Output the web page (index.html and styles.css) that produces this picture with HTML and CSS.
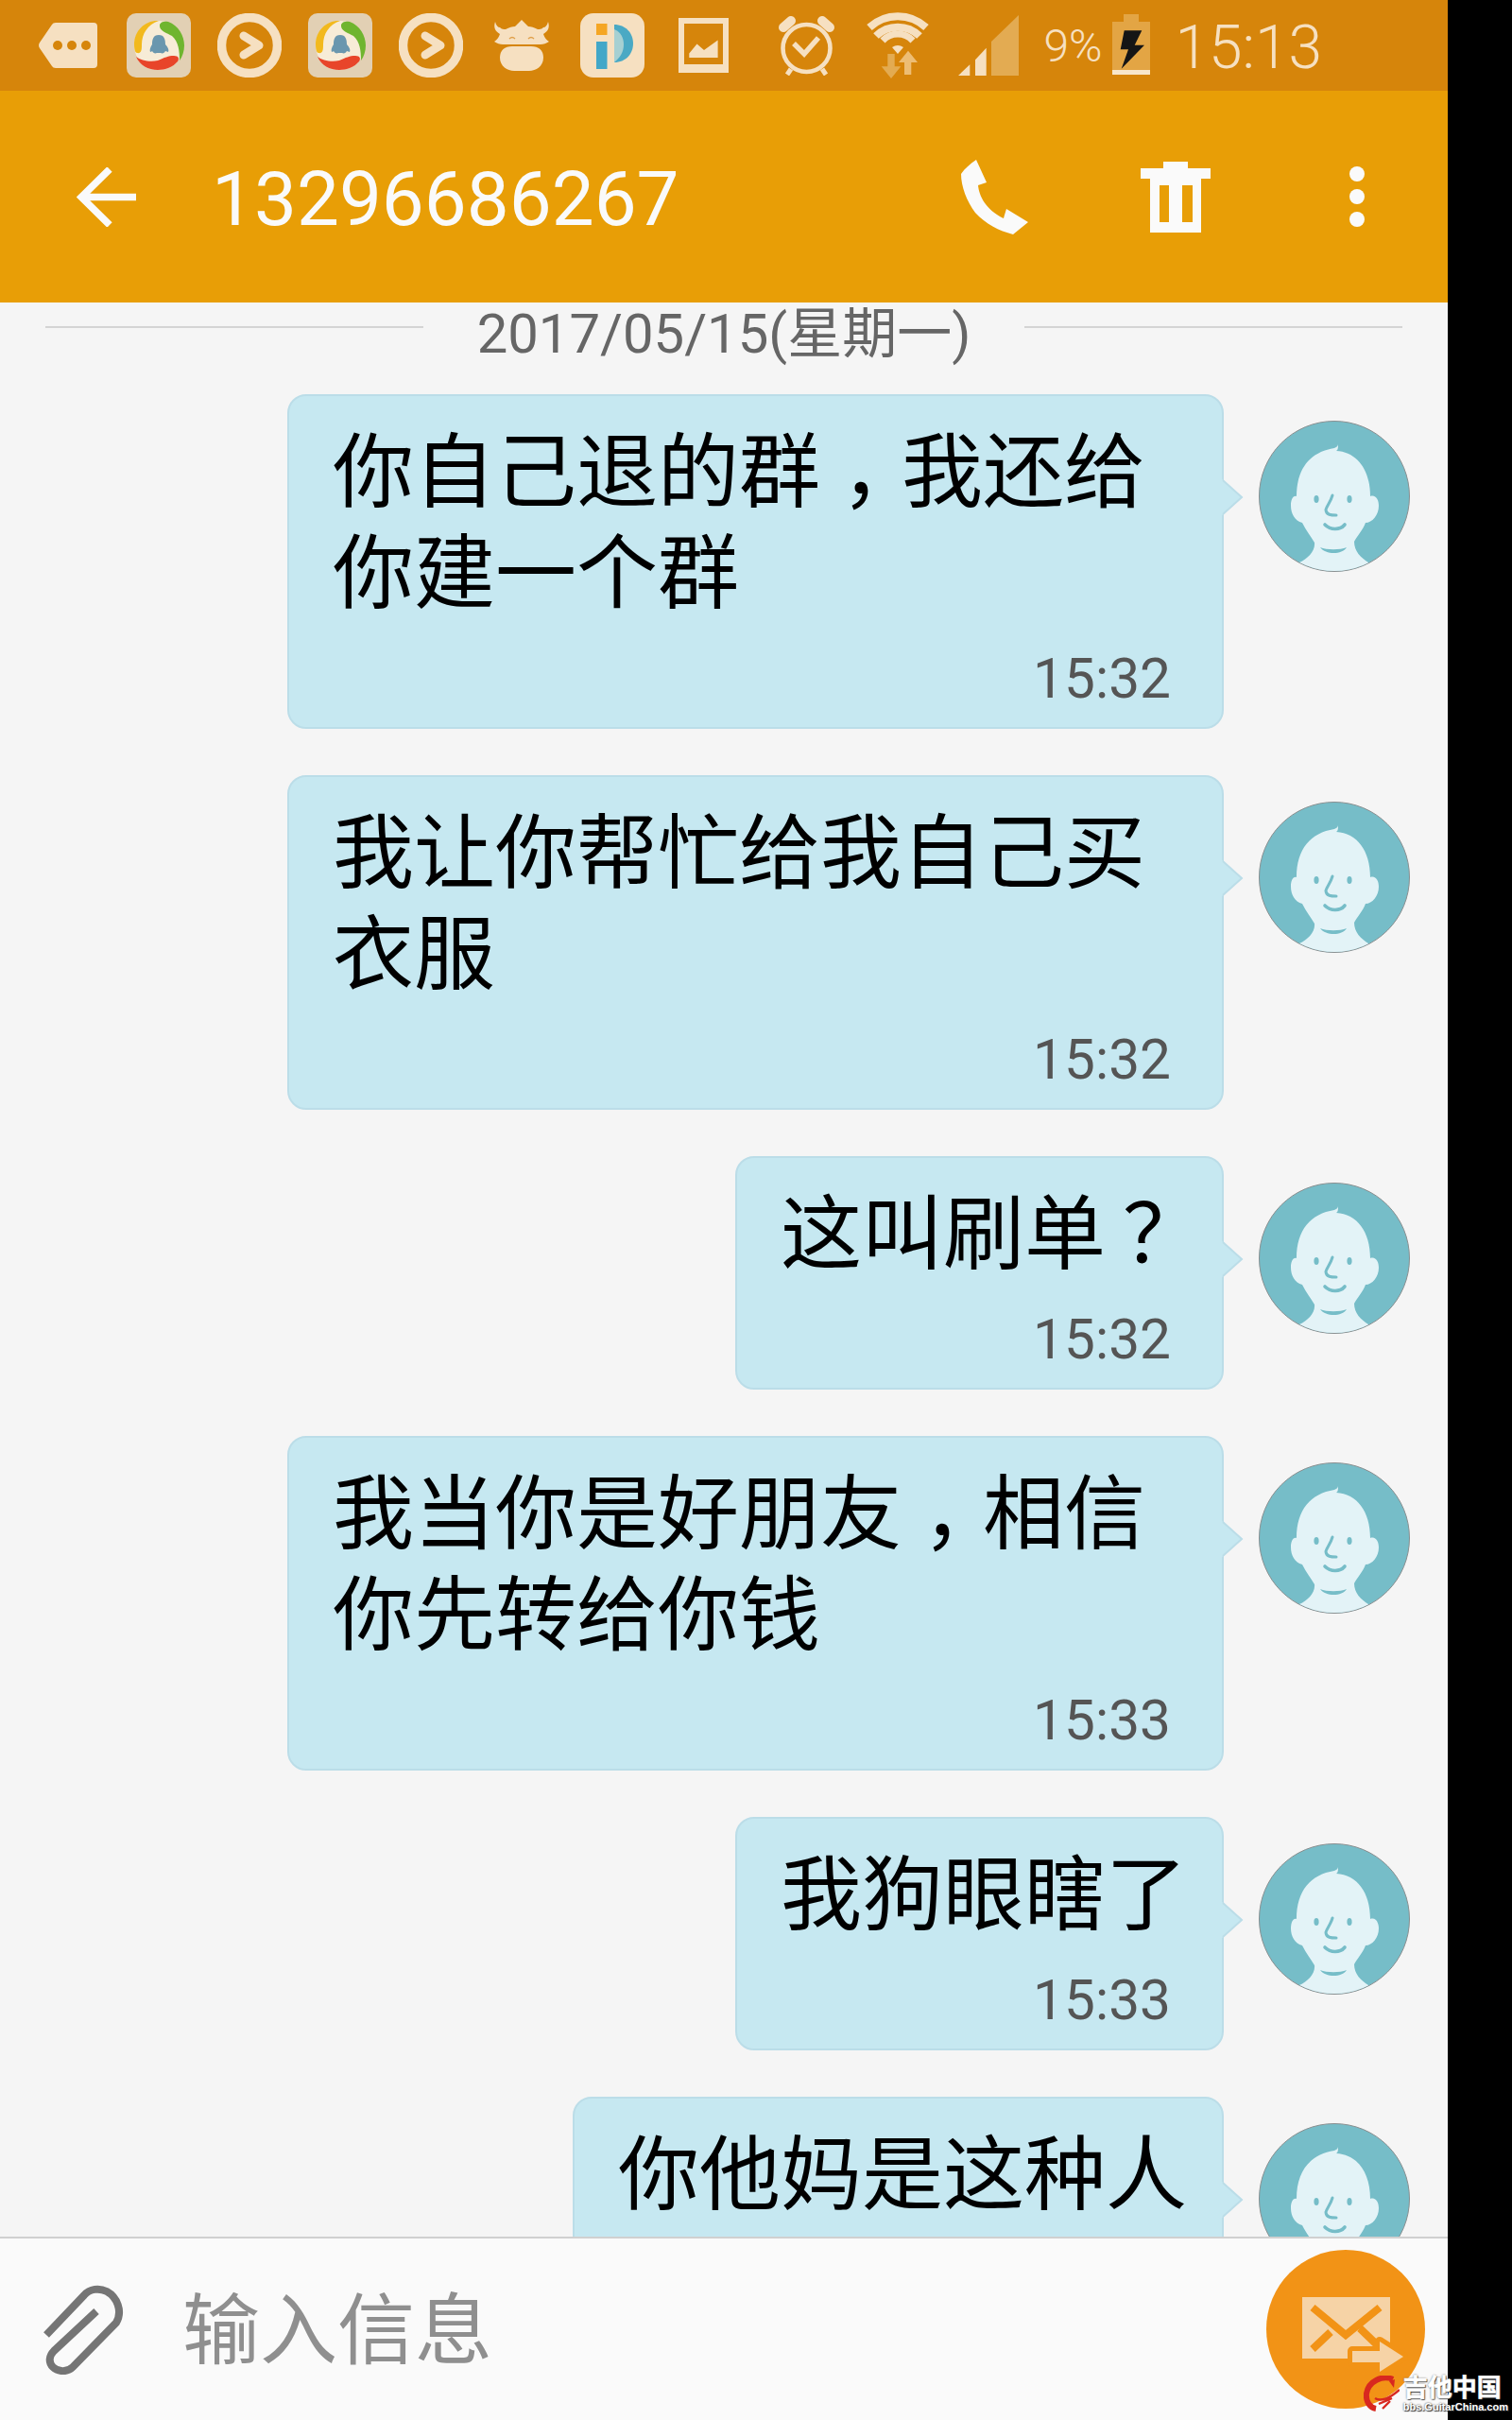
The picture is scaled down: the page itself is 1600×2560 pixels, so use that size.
FILE: index.html
```html
<!DOCTYPE html>
<html lang="zh">
<head>
    <title>13296686267</title>
    <meta charset="UTF-8" />
    <link rel="stylesheet" href="styles.css">
</head>
<body>
<svg class="defs" width="0" height="0">
    <defs>
        <clipPath id="avatarClip"><circle cx="80" cy="80" r="79"/></clipPath>
        <symbol id="avatar" viewBox="0 0 160 160">
            <circle cx="80" cy="80" r="79.5" fill="#76bdc8" stroke="#8a8f90" stroke-width="1"/>
            <g clip-path="url(#avatarClip)">
                <path fill="#e3f3f7" d="M40 80 C40 50 55 33 80 29 C82 28 84 27 84 25 C84 28 84 31 82 32 C104 33 118 52 118 80 C124 78 127 84 127 90 C127 100 120 108 113 108 C110 116 104 122 101 128 C101 138 108 145 116 150 L116 160 L43 160 L43 150 C52 146 60 138 59 129 C55 122 50 116 46 108 C38 106 34 98 34 90 C34 84 36 79 40 80 Z"/>
                <ellipse cx="61" cy="83" rx="2.6" ry="4" fill="#76bdc8"/>
                <ellipse cx="96" cy="83" rx="2.6" ry="4" fill="#76bdc8"/>
                <path d="M78 79 C76 86 72 90 71 94 C71 100 77 100 82 100" fill="none" stroke="#76bdc8" stroke-width="3" stroke-linecap="round"/>
                <path d="M70 110 C76 116 86 116 91 110" fill="none" stroke="#76bdc8" stroke-width="3.6" stroke-linecap="round"/>
                <path d="M65 134 C72 137 86 137 93 134 C88 142 71 142 65 134Z" fill="#76bdc8"/>
            </g>
        </symbol>
        <symbol id="qqNews" viewBox="0 0 68 68">
            <rect width="68" height="68" rx="10" fill="#e2d0b4"/>
            <circle cx="34" cy="34" r="26" fill="#f7ecd7"/>
            <path fill="#f2b91d" d="M34 8 C20 7 8 18 8 33 C8 38 9 42 11 42 C16 43 16 38 16 33 C16 22 22 12 34 8Z"/>
            <path fill="#6fb52f" d="M35 12 C36 9 40 8 44 9 C55 13 61 24 61 34 C61 40 59 46 56 50 C56 40 55 30 48 24 C43 21 34 19 35 12Z"/>
            <path fill="#e8452a" d="M10 46 C15 50 25 52 33 50 C40 47 44 45 50 45 C55 45 56 48 54 51 C49 57 41 60 33 60 C23 60 14 55 10 46Z"/>
            <path fill="#6a97ae" d="M34 23 C28 23 27 28 27 33 C25 36 24 39 25 41 C26 41 27 40 27 40 C28 42 30 43 32 42 H36 C38 43 40 42 41 40 C42 40 43 41 44 41 C45 39 44 36 41 33 C41 28 40 23 34 23Z"/>
        </symbol>
        <symbol id="playRing" viewBox="0 0 68 68">
            <circle cx="34" cy="34" r="29.5" fill="none" stroke="#f6e0c1" stroke-width="9.5"/>
            <path d="M28 24 L44 34 L28 44" fill="none" stroke="#f6e0c1" stroke-width="9" stroke-linecap="round" stroke-linejoin="round"/>
        </symbol>
    </defs>
</svg>

<div class="phone">
    <div class="status">
        <div class="status-left">
            <span class="slot">
                <svg width="62" height="48" viewBox="0 0 62 48">
                    <path fill="#f6e0c1" d="M1 21 L14 2 Q15 0 18 0 H58 Q62 0 62 4 V44 Q62 48 58 48 H18 Q15 48 14 46 L1 27 Q-1 24 1 21Z"/>
                    <circle cx="20" cy="24" r="5" fill="#d6850b"/><circle cx="35" cy="24" r="5" fill="#d6850b"/><circle cx="50" cy="24" r="5" fill="#d6850b"/>
                </svg>
            </span>
            <span class="slot"><svg width="68" height="68"><use href="#qqNews"/></svg></span>
            <span class="slot"><svg width="68" height="68"><use href="#playRing"/></svg></span>
            <span class="slot"><svg width="68" height="68"><use href="#qqNews"/></svg></span>
            <span class="slot"><svg width="68" height="68"><use href="#playRing"/></svg></span>
            <span class="slot">
                <svg width="60" height="54" viewBox="0 0 60 54">
                    <path fill="#f6e0c1" d="M2 2 C3 6 5 8 7 8 C9 10 11 10 13 10 C17 8 20 7 23 7 L30 0 L37 7 C40 7 43 8 47 10 C49 10 51 10 53 8 C55 8 57 6 58 2 C60 8 58 12 53 15 C54 18 55 20 59 23 C56 25 53 26 50 26 L10 26 C7 26 4 25 1 23 C5 20 6 18 7 15 C2 12 0 8 2 2Z"/>
                    <path fill="#f6e0c1" d="M7 40 C7 32 12 28 20 28 H40 C48 28 53 32 53 40 C53 49 45 54 38 54 H22 C15 54 7 49 7 40Z"/>
                    <path d="M17 20 Q20 17 23 20 M37 20 Q40 17 43 20" fill="none" stroke="#e0a04a" stroke-width="1.4"/>
                </svg>
            </span>
            <span class="slot">
                <svg width="68" height="68" viewBox="0 0 68 68">
                    <rect width="68" height="68" rx="14" fill="#f6e0c1"/>
                    <rect x="17" y="11" width="11.5" height="12" fill="#f5a623"/>
                    <rect x="17" y="30" width="11.5" height="29" fill="#42a7c8"/>
                    <path d="M36 12 C48 12 56 21 56 32 C56 43 48 52 36 52Z" fill="#4aa9c4"/>
                    <path d="M36 17 C43 20 46 26 46 33 C46 41 42 47 36 52Z" fill="#a6d0d2"/>
                </svg>
            </span>
            <span class="slot">
                <svg width="53" height="58" viewBox="0 0 53 58">
                    <path fill="#f6e0c1" fill-rule="evenodd" d="M0 0 H53 V58 H0Z M6 6 V49 H47 V6Z"/>
                    <path fill="#f6e0c1" d="M11.3 37.6 L19.5 27.6 L27 34 L41.6 23.6 V42 H11.3Z"/>
                </svg>
            </span>
        </div>
        <div class="status-right">
            <span class="slot">
                <svg width="60" height="63" viewBox="0 0 60 63">
                    <circle cx="29.5" cy="34" r="25" fill="none" stroke="#f6e0c1" stroke-width="4.6"/>
                    <path d="M5 12 L13 5 M54 12 L46 5" stroke="#f6e0c1" stroke-width="10" stroke-linecap="round"/>
                    <path d="M16 29 L27 40 L42 23" fill="none" stroke="#f6e0c1" stroke-width="5.5"/>
                    <path d="M13 56 L9 62 M46 56 L50 62" stroke="#f6e0c1" stroke-width="5"/>
                </svg>
            </span>
            <span class="slot">
                <svg width="67" height="71" viewBox="0 0 67 71">
                    <g fill="none" stroke="#f6e0c1" stroke-width="8">
                        <path d="M3 16 A44 44 0 0 1 63 16"/>
                        <path d="M10 25 A33 33 0 0 1 56 25"/>
                    </g>
                    <path d="M17 30 A22 22 0 0 1 49 30" fill="none" stroke="#f6e0c1" stroke-width="7"/>
                    <path fill="#f6e0c1" d="M27 37 Q33 33 39 37 L33 44Z"/>
                    <path fill="#e3ab52" d="M22.3 44 H29.7 V57.3 H36.3 L26 70 L15.7 57.3 H22.3Z"/>
                    <path fill="#edbd74" d="M44 40.7 L54 53 H47.3 V66 H40 V53 H34Z"/>
                </svg>
            </span>
            <span class="slot">
                <svg width="64" height="64" viewBox="0 0 64 64">
                    <path fill="#f6e0c1" d="M0 64 H12.3 V52.3Z M18 64 H29.7 V34.7 L18 47.3Z"/>
                    <path fill="#e3ab52" d="M35 64 H64 V0 L35 28Z"/>
                </svg>
            </span>
            <span class="percent">9%</span>
            <svg class="battery" width="40" height="64" viewBox="0 0 40 64">
                <path fill="#e3a544" d="M12 0 H28 V8 H40 V59 H0 V8 H12Z"/>
                <rect y="59" width="40" height="5" fill="#f8e6cb"/>
                <path fill="#151515" d="M12.7 17.3 H31.3 L23.7 32.7 H34 L9.7 57.7 L17 37.3 H8.7Z"/>
            </svg>
            <span class="clock">15:13</span>
        </div>
    </div>

    <div class="toolbar">
        <svg class="back" width="63" height="63" viewBox="0 0 63 63">
            <path d="M63 31.5 H5 M35 2 L5 31.5 L35 61" fill="none" stroke="#fafafa" stroke-width="7.5"/>
        </svg>
        <h1 class="title">13296686267</h1>
        <div class="actions">
            <span class="action">
                <svg width="71" height="79" viewBox="0 0 71 79">
                    <path fill="#fafafa" d="M16 0 L27 24 C24 25 21 26 18 27 C19 38 26 53 45 62 C46 58 47 55 48 52 L71 66 L55 79 C40 75 26 68 15 56 C6 44 0 28 0 15 C4 9 9 5 16 0Z"/>
                </svg>
            </span>
            <span class="action">
                <svg width="74" height="75" viewBox="0 0 74 75">
                    <path fill="#fafafa" fill-rule="evenodd" d="M24 0 H50 V7 H74 V18 H64 V75 H10 V18 H0 V7 H24Z M20 25 V64 H30 V25Z M44 25 V64 H55 V25Z"/>
                </svg>
            </span>
            <span class="action">
                <svg width="16" height="64" viewBox="0 0 16 64">
                    <circle cx="8" cy="8" r="8" fill="#fafafa"/><circle cx="8" cy="32" r="8" fill="#fafafa"/><circle cx="8" cy="56" r="8" fill="#fafafa"/>
                </svg>
            </span>
        </div>
    </div>

    <div class="messages">
        <div class="date-row">
            <span class="date-line"></span>
            <span class="date-text">2017/05/15(星期一)</span>
            <span class="date-line"></span>
        </div>

        <div class="msg">
            <div class="bubble bubble-wide">
                <svg class="tail" width="24" height="38" viewBox="0 0 24 38"><path d="M0 0 L22 19 L0 38Z" fill="#c6e8f1"/><path d="M1 1 L21 19 L1 37" fill="none" stroke="#bbdde8" stroke-width="2"/></svg>
                <div class="text">你自己退的群<span class="comma">，</span>我还给<br>你建一个群</div>
                <div class="time">15:32</div>
            </div>
            <svg class="avatar" width="160" height="160"><use href="#avatar"/></svg>
        </div>
        <div class="msg">
            <div class="bubble bubble-wide">
                <svg class="tail" width="24" height="38" viewBox="0 0 24 38"><path d="M0 0 L22 19 L0 38Z" fill="#c6e8f1"/><path d="M1 1 L21 19 L1 37" fill="none" stroke="#bbdde8" stroke-width="2"/></svg>
                <div class="text">我让你帮忙给我自己买<br>衣服</div>
                <div class="time">15:32</div>
            </div>
            <svg class="avatar" width="160" height="160"><use href="#avatar"/></svg>
        </div>
        <div class="msg">
            <div class="bubble">
                <svg class="tail" width="24" height="38" viewBox="0 0 24 38"><path d="M0 0 L22 19 L0 38Z" fill="#c6e8f1"/><path d="M1 1 L21 19 L1 37" fill="none" stroke="#bbdde8" stroke-width="2"/></svg>
                <div class="text">这叫刷单<span class="question">？</span></div>
                <div class="time">15:32</div>
            </div>
            <svg class="avatar" width="160" height="160"><use href="#avatar"/></svg>
        </div>
        <div class="msg">
            <div class="bubble bubble-wide">
                <svg class="tail" width="24" height="38" viewBox="0 0 24 38"><path d="M0 0 L22 19 L0 38Z" fill="#c6e8f1"/><path d="M1 1 L21 19 L1 37" fill="none" stroke="#bbdde8" stroke-width="2"/></svg>
                <div class="text">我当你是好朋友<span class="comma">，</span>相信<br>你先转给你钱</div>
                <div class="time">15:33</div>
            </div>
            <svg class="avatar" width="160" height="160"><use href="#avatar"/></svg>
        </div>
        <div class="msg">
            <div class="bubble">
                <svg class="tail" width="24" height="38" viewBox="0 0 24 38"><path d="M0 0 L22 19 L0 38Z" fill="#c6e8f1"/><path d="M1 1 L21 19 L1 37" fill="none" stroke="#bbdde8" stroke-width="2"/></svg>
                <div class="text">我狗眼瞎了</div>
                <div class="time">15:33</div>
            </div>
            <svg class="avatar" width="160" height="160"><use href="#avatar"/></svg>
        </div>
        <div class="msg">
            <div class="bubble bubble-last">
                <svg class="tail" width="24" height="38" viewBox="0 0 24 38"><path d="M0 0 L22 19 L0 38Z" fill="#c6e8f1"/><path d="M1 1 L21 19 L1 37" fill="none" stroke="#bbdde8" stroke-width="2"/></svg>
                <div class="text">你他妈是这种人</div>
            </div>
            <svg class="avatar" width="160" height="160"><use href="#avatar"/></svg>
        </div>
    </div>

    <div class="composer">
        <svg class="clip" width="87" height="95" viewBox="0 0 87 95">
            <path d="M4 53 L44 11 C50 4 60 3 68 7 C79 13 85 28 78 40 L32 87 C26 93 16 92 11 87 C6 82 7 75 12 70 L57 28" fill="none" stroke="#757575" stroke-width="8"/>
        </svg>
        <span class="placeholder">输入信息</span>
        <span class="send">
            <svg width="168" height="168" viewBox="0 0 168 168">
                <rect x="38" y="50" width="93" height="65" fill="#f6d3a6"/>
                <path d="M49 61 L84 90 L120 61 M49 105 L68 87 M99 83 L125 108" fill="none" stroke="#f29316" stroke-width="8"/>
                <path d="M91 107 H120 V97 L145 113 L120 129 V119 H91Z" fill="#f6d3a6" stroke="#f29316" stroke-width="10" paint-order="stroke" stroke-linejoin="round"/>
            </svg>
        </span>
    </div>
</div>

<div class="watermark">
    <svg width="38" height="38" viewBox="0 0 38 38">
        <path d="M31 4 C20 -1 5 6 3 19 C2 28 7 34 13 35" fill="none" stroke="#d8281f" stroke-width="6"/>
        <path d="M12 24 C18 28 28 24 38 15 M16 30 L30 24 M20 35 L28 27" fill="none" stroke="#d8281f" stroke-width="2.4"/>
        <path d="M27 6 L33 4 L32 13Z" fill="#d8281f"/>
    </svg>
    <div class="mark-text">
        <div class="mark-cn">吉他中国</div>
        <div class="mark-en">bbs.GuitarChina.com</div>
    </div>
</div>
</body>
</html>
```

FILE: styles.css
```css
/* Page */
body {
    margin: 0;
    background-color: #000;
    font-family: "Roboto", "Noto Sans CJK SC", sans-serif;
    position: relative;
}

.defs {
    display: block;
    height: 0;
}

.phone {
    width: 1532px;
    height: 2560px;
    display: flex;
    flex-direction: column;
    background-color: #f5f5f5;
}

/* Status bar */
.status {
    height: 96px;
    flex: none;
    display: flex;
    justify-content: space-between;
    align-items: center;
    background-color: #d6850b;
    color: #f6e0c1;
}

.status-left {
    display: flex;
    padding-left: 24px;
}

.status-right {
    display: flex;
    align-items: center;
    padding-right: 133px;
}

.slot {
    width: 96px;
    display: flex;
    justify-content: center;
    align-items: center;
}

.percent {
    font-size: 48px;
    font-weight: 300;
    margin-left: 10px;
}

.battery {
    margin-left: 10px;
    margin-top: -2px;
}

.clock {
    font-size: 64px;
    font-weight: 300;
    margin-left: 27px;
    margin-top: 4px;
}

/* Toolbar */
.toolbar {
    height: 224px;
    flex: none;
    display: flex;
    align-items: center;
    background-color: #e89e06;
    color: #fafafa;
}

.back {
    margin-left: 81px;
}

.title {
    margin: 5px 0 0 80px;
    font-size: 80px;
    font-weight: 400;
}

.actions {
    display: flex;
    margin-left: auto;
}

.action {
    width: 192px;
    display: flex;
    justify-content: center;
    align-items: center;
}

/* Messages */
.messages {
    flex: 1;
    min-height: 0;
    overflow: hidden;
}

.date-row {
    height: 97px;
    display: flex;
    padding: 0 48px;
    box-sizing: border-box;
}

.date-line {
    flex: 1;
    height: 2px;
    margin-top: 25px;
    background-color: #d4d4d4;
}

.date-text {
    padding: 0 57px;
    font-size: 58px;
    line-height: 66px;
    color: #666;
}

.msg {
    display: flex;
    justify-content: flex-end;
    align-items: flex-start;
    padding-right: 40px;
    margin-bottom: 49px;
}

.bubble {
    position: relative;
    box-sizing: border-box;
    padding: 28px 37px 0 46px;
    border: 2px solid #bbdde8;
    border-radius: 20px;
    background-color: #c6e8f1;
}

.bubble-wide {
    width: 991px;
}

.bubble-last {
    padding-bottom: 60px;
}

.tail {
    position: absolute;
    top: 88px;
    right: -24px;
}

.text {
    font-size: 86px;
    line-height: 107px;
    color: #000;
}

/* the phone font centres these marks in their cell, so push the glyph over */
.comma {
    padding-left: 22px;
    letter-spacing: -22px;
}

.question {
    padding-left: 18px;
    letter-spacing: -18px;
}

.time {
    height: 108px;
    padding-right: 17px;
    font-size: 58.6px;
    line-height: 114px;
    text-align: right;
    color: #555;
}

.avatar {
    flex: none;
    margin: 28px 0 0 37px;
}

/* Composer */
.composer {
    height: 192px;
    flex: none;
    display: flex;
    align-items: center;
    border-top: 2px solid #d0d0d0;
    background-color: #fafafa;
}

.clip {
    margin-left: 45px;
}

.placeholder {
    margin: 0 0 12px 61px;
    font-size: 82px;
    color: #8f8f8f;
}

.send {
    width: 168px;
    height: 168px;
    margin-left: auto;
    margin-right: 24px;
    border-radius: 50%;
    background-color: #f29316;
}

/* Forum watermark */
.watermark {
    position: absolute;
    right: 4px;
    bottom: 8px;
    display: flex;
    align-items: center;
}

.mark-text {
    margin-left: 4px;
    color: #fff;
    text-shadow: 0 0 2px #333, 1px 1px 1px #333;
    font-weight: bold;
}

.mark-cn {
    font-size: 26px;
    line-height: 28px;
    white-space: nowrap;
    -webkit-text-stroke: 0.5px #fff;
}

.mark-en {
    font-family: "Liberation Sans", sans-serif;
    font-size: 11px;
    line-height: 12px;
    white-space: nowrap;
}
```
